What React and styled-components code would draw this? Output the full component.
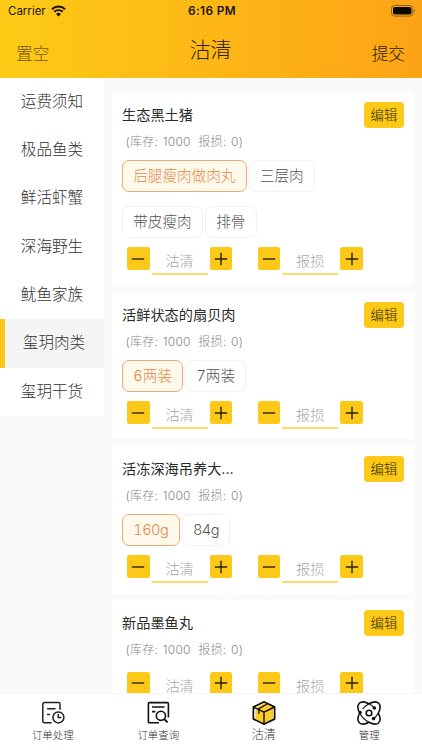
import React, { Component } from 'react'
import styled, { createGlobalStyle, css } from 'styled-components'

const GlobalStyle = createGlobalStyle`
  * {
    box-sizing: border-box;
  }

  body {
    margin: 0;
    overflow: hidden;
    background: #fafafa;
    color: #333;
    font-family: Inter, 'Noto Sans CJK SC', sans-serif;
    font-weight: 300;
  }
`

const Screen = styled.div`
  display: flex;
  flex-direction: column;
  width: 422px;
  height: 750px;
`

const Header = styled.header`
  flex: none;
  height: 77.5px;
  background: linear-gradient(90deg, #fdcb16, #fda316);
`

const StatusBar = styled.div`
  display: grid;
  grid-template-columns: 1fr auto 1fr;
  align-items: center;
  height: 22px;
  padding: 0 6px 0 8px;
  font-size: 11.5px;
  font-weight: 400;
  line-height: 22px;
  color: #1c1508;
`

const Carrier = styled.div`
  display: flex;
  align-items: center;
  gap: 5px;
`

const Clock = styled.div`
  font-size: 11.8px;
  font-weight: 600;
  letter-spacing: 0.4px;
`

const BatterySlot = styled.div`
  display: flex;
  justify-content: flex-end;
`

const NavBar = styled.div`
  display: flex;
  justify-content: space-between;
  align-items: center;
  height: 56px;
  padding: 0 17px 0 16px;
`

const NavTitle = styled.h1`
  margin: 0;
  font-size: 21px;
  font-weight: 300;
  line-height: 30px;
  color: #2e2208;
`

const NavAction = styled.button`
  margin: 8px 0 0;
  padding: 0;
  border: 0;
  background: none;
  font: inherit;
  font-size: 16.7px;
  line-height: 24px;
  color: #2e2208;
  opacity: ${props => (props.$dim ? 0.65 : 1)};
`

const Body = styled.main`
  display: flex;
  flex: 1;
  min-height: 0;
`

const Sidebar = styled.nav`
  flex: none;
  width: 104px;
`

const SidebarItem = styled.div`
  height: 48.35px;
  background: #fff;
  font-size: 15.6px;
  line-height: 48.4px;
  text-align: center;
  color: #333;

  ${props =>
    props.$active &&
    css`
      padding-left: 4px;
      background: linear-gradient(90deg, #fdc816 4.7px, #f5f5f5 4.7px);
    `}
`

const ProductList = styled.section`
  display: flex;
  flex: 1;
  flex-direction: column;
  gap: 7.5px;
  padding: 14.5px 8px 0;
  overflow: hidden;
`

const Card = styled.article`
  flex: none;
  padding: 10px 10px 9.5px;
  background: #fff;
`

const CardHead = styled.div`
  display: flex;
  justify-content: space-between;
  align-items: center;
  height: 26px;
`

const ProductName = styled.h2`
  margin: 0;
  font-size: 14.2px;
  font-weight: 400;
  line-height: 26px;
  color: #2a2a2a;
`

const EditButton = styled.button`
  width: 40px;
  height: 26px;
  padding: 0;
  border: 0;
  border-radius: 4px;
  background: #fcc918;
  font: inherit;
  font-size: 13.4px;
  line-height: 25px;
  color: #332806;
`

const Stock = styled.div`
  display: flex;
  gap: 7.5px;
  height: 27.5px;
  padding-left: 3.5px;
  font-size: 12px;
  line-height: 27.5px;
  letter-spacing: 0.28px;
  color: #888;
`

const Count = styled.span`
  margin-left: 4.5px;
`

const Specs = styled.div`
  display: flex;
  flex-wrap: wrap;
  gap: 14px 2.2px;
  max-width: 240px;
  padding: 4.5px 0 1px;
`

const Spec = styled.button`
  height: 32px;
  padding: 0 10.2px;
  border: 1px solid ${props => (props.$active ? '#e9ab78' : '#f1f1f3')};
  border-radius: 7px;
  background: ${props => (props.$active ? '#fff9ec' : '#fff')};
  font: inherit;
  font-size: 14.6px;
  font-variant-numeric: tabular-nums;
  letter-spacing: ${props => (props.$latin ? '-0.5px' : 0)};
  line-height: 31px;
  color: ${props => (props.$active ? '#e08a4a' : '#555')};
`

const Steppers = styled.div`
  display: flex;
  gap: 25.5px;
  padding: 8px 0 0 5px;
`

const StepperBox = styled.div`
  display: flex;
  align-items: flex-start;
  gap: 2px;
`

const StepButton = styled.button`
  display: flex;
  align-items: center;
  justify-content: center;
  width: 22.6px;
  height: 23px;
  padding: 0;
  border: 0;
  border-radius: 2.5px;
  background: #fcc918;
`

const StepValue = styled.div`
  width: 56px;
  height: 28px;
  border-bottom: 2px solid #fbdb6c;
  font-size: 14.2px;
  line-height: 27px;
  text-align: center;
  color: #a5a5a5;
`

const TabBar = styled.footer`
  display: grid;
  flex: none;
  grid-template-columns: repeat(4, 1fr);
  height: 57.5px;
  background: #fff;
  border-top: 1px solid #f6f6f6;
`

const Tab = styled.div`
  display: flex;
  flex-direction: column;
  align-items: center;
  padding-top: 7.3px;
  font-size: ${props => (props.$active ? '12px' : '10.4px')};
  line-height: ${props => (props.$active ? '17px' : '19px')};
  color: #333;

  svg {
    flex: none;
    margin-bottom: 1.2px;
  }
`

const WifiIcon = () => (
  <svg width='15' height='12' viewBox='0 0 15 12' fill='none' stroke='#110d04'>
    <path d='M1 4.3a9.2 9.2 0 0 1 13 0' strokeWidth='2' />
    <path d='M3.3 6.8a6 6 0 0 1 8.4 0' strokeWidth='1.9' />
    <path d='M7.5 11.4 5.1 9a3.5 3.5 0 0 1 4.8 0z' fill='#110d04' stroke='none' />
  </svg>
)

const BatteryIcon = () => (
  <svg width='25' height='12' viewBox='0 0 25 12'>
    <rect x='.5' y='.5' width='21.5' height='10.6' rx='3' fill='none' stroke='#8f6510' />
    <rect x='2' y='2' width='18.5' height='7.6' rx='1.8' fill='#0c0903' />
    <path d='M23.3 4v3.6c1.2-.5 1.2-3.1 0-3.6' fill='#8f6510' />
  </svg>
)

const StepIcon = ({ plus }) => (
  <svg width='14' height='14' viewBox='0 0 14 14' stroke='#2b2206' strokeWidth='1.4'>
    <path d={plus ? 'M.8 7h12.4M7 .8v12.4' : 'M.8 7h12.4'} />
  </svg>
)

const OrderIcon = () => (
  <svg width='24' height='24' viewBox='0 0 24 24' fill='none' stroke='#222' strokeWidth='1.5' strokeLinecap='round'>
    <path d='M10 21.8H3.4a1.6 1.6 0 0 1-1.6-1.6V3.2a1.6 1.6 0 0 1 1.6-1.6h14a1.6 1.6 0 0 1 1.6 1.6v5' />
    <path d='M6.6 7.8H14M6.6 13.6h1.8' />
    <circle cx='17.4' cy='16.4' r='5.5' />
    <path d='M17.2 13.6v3h2.6' />
  </svg>
)

const SearchIcon = () => (
  <svg width='24' height='24' viewBox='0 0 24 24' fill='none' stroke='#111' strokeWidth='1.6'>
    <path d='M13 21.8H3.3a.9.9 0 0 1-.9-.9V2.5a.9.9 0 0 1 .9-.9h18.2a.9.9 0 0 1 .9.9v14' />
    <path d='M6 6h12.6M6 10.6h3.4' />
    <circle cx='14.9' cy='14.8' r='4.6' />
    <path d='m18 18 3.6 3.4' strokeWidth='1.9' />
  </svg>
)

const BoxIcon = () => (
  <svg width='24' height='24' viewBox='0 0 24 24' fill='none' stroke='#14110a' strokeWidth='1.4' strokeLinejoin='round'>
    <path d='M12 .9 22.6 6v12L12 23.1 1.4 18V6z' fill='#fff' />
    <path d='M12.5 1.8 21.6 6.4v11.2L12 22.2 3.4 18V7.4z' fill='#fccb2c' stroke='none' />
    <path d='M12 .9 22.6 6v12L12 23.1 1.4 18V6zM1.4 6 12 11.2 22.6 6M12 11.2v11.9' />
    <path d='M15.6 2.8 6.9 7.6v5.2' strokeWidth='1.3' />
  </svg>
)

const ManageIcon = () => (
  <svg width='24' height='24' viewBox='0 0 24 24' fill='none' stroke='#111' strokeWidth='1.6'>
    {/* outer contour of the two crossed orbits, then the visible inner arcs */}
    <path d='M12 2.7C16 .6 20 .6 21.7 2.3S23.4 8 21.3 12c2.1 4 2.1 8 .4 9.7S16 23.4 12 21.3C8 23.4 4 23.4 2.3 21.7S.6 16 2.7 12C.6 8 .6 4 2.3 2.3S8 .6 12 2.7z' />
    <path d='M12 2.7c2 1 3.8 2.3 5.4 4.1M2.7 12c1.9 3.7 5 7.1 9.3 9.3M21.3 12c-1.1 2.1-2.7 4-4.7 5.8M12 2.7C9.2 4.3 7.2 6 5.6 8' strokeWidth='1.2' />
    <circle cx='12' cy='12' r='2.8' />
    <circle cx='3.2' cy='11.4' r='1.6' fill='#111' stroke='none' />
    <circle cx='17.4' cy='7' r='1.8' fill='#111' stroke='none' />
    <circle cx='16.6' cy='17.6' r='1.8' fill='#111' stroke='none' />
  </svg>
)

const Stepper = ({ label }) => (
  <StepperBox>
    <StepButton>
      <StepIcon />
    </StepButton>
    <StepValue>{label}</StepValue>
    <StepButton>
      <StepIcon plus />
    </StepButton>
  </StepperBox>
)

const categories = [
  '运费须知',
  '极品鱼类',
  '鲜活虾蟹',
  '深海野生',
  '鱿鱼家族',
  '玺玥肉类',
  '玺玥干货'
]

const products = [
  { name: '生态黑土猪', specs: ['后腿瘦肉做肉丸', '三层肉', '带皮瘦肉', '排骨'] },
  { name: '活鲜状态的扇贝肉', specs: ['6两装', '7两装'] },
  { name: '活冻深海吊养大...', specs: ['160g', '84g'] },
  { name: '新品墨鱼丸', specs: [] }
]

const tabs = [
  { label: '订单处理', Icon: OrderIcon },
  { label: '订单查询', Icon: SearchIcon },
  { label: '沽清', Icon: BoxIcon },
  { label: '管理', Icon: ManageIcon }
]

class ProductCard extends Component {
  state = { spec: 0 }

  render() {
    const { name, specs } = this.props
    return (
      <Card>
        <CardHead>
          <ProductName>{name}</ProductName>
          <EditButton>编辑</EditButton>
        </CardHead>
        <Stock>
          <span>
            (库存:<Count>1000</Count>
          </span>
          <span>
            报损:<Count>0)</Count>
          </span>
        </Stock>
        {specs.length > 0 && (
          <Specs>
            {specs.map((spec, i) => (
              <Spec
                key={spec}
                $active={i === this.state.spec}
                $latin={/^\w+$/.test(spec)}
                onClick={() => this.setState({ spec: i })}
              >
                {spec}
              </Spec>
            ))}
          </Specs>
        )}
        <Steppers>
          <Stepper label='沽清' />
          <Stepper label='报损' />
        </Steppers>
      </Card>
    )
  }
}

class App extends Component {
  state = { category: 5, tab: 2 }

  render() {
    const { category, tab } = this.state
    return (
      <Screen>
        <GlobalStyle />
        <Header>
          <StatusBar>
            <Carrier>
              Carrier
              <WifiIcon />
            </Carrier>
            <Clock>6:16 PM</Clock>
            <BatterySlot>
              <BatteryIcon />
            </BatterySlot>
          </StatusBar>
          <NavBar>
            <NavAction $dim>置空</NavAction>
            <NavTitle>沽清</NavTitle>
            <NavAction>提交</NavAction>
          </NavBar>
        </Header>
        <Body>
          <Sidebar>
            {categories.map((label, i) => (
              <SidebarItem
                key={label}
                $active={i === category}
                onClick={() => this.setState({ category: i })}
              >
                {label}
              </SidebarItem>
            ))}
          </Sidebar>
          <ProductList>
            {products.map(product => (
              <ProductCard key={product.name} {...product} />
            ))}
          </ProductList>
        </Body>
        <TabBar>
          {tabs.map(({ label, Icon }, i) => (
            <Tab
              key={label}
              $active={i === tab}
              onClick={() => this.setState({ tab: i })}
            >
              <Icon />
              {label}
            </Tab>
          ))}
        </TabBar>
      </Screen>
    )
  }
}

export default App
